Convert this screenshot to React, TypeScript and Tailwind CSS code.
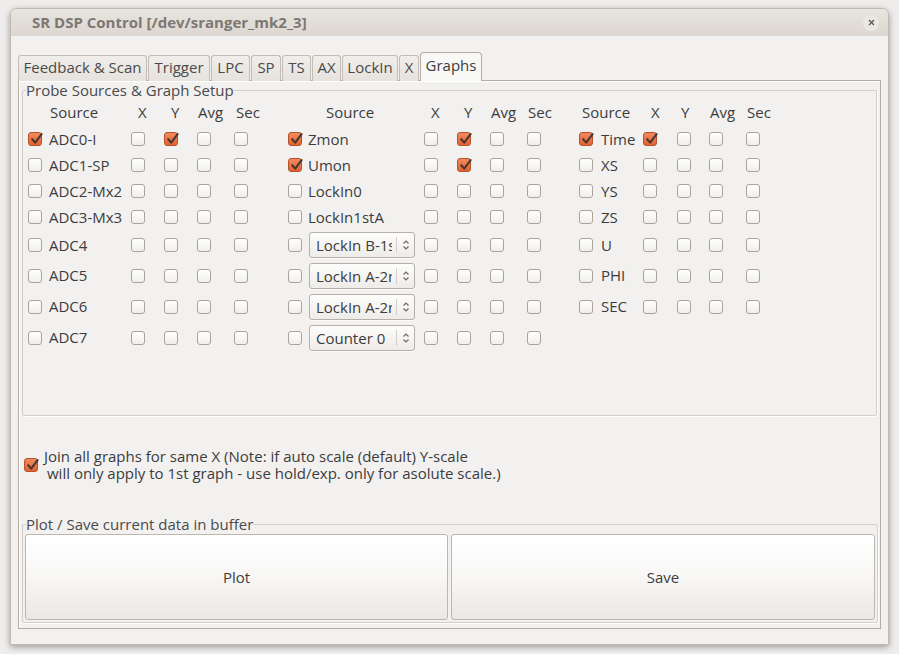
import React from "react";

const FONT = { fontFamily: '"Open Sans", "Noto Sans", sans-serif' };

const colW = [
  "w-[103px]", "w-[33px]", "w-[33px]", "w-[37px]", "w-[54px]",
  "w-[136px]", "w-[33px]", "w-[33px]", "w-[37px]", "w-[52px]",
  "w-[64px]", "w-[34px]", "w-[32px]", "w-[37px]", "w-[30px]",
];
const headPad = [
  "pl-[22px]", "pl-[7px]", "pl-[7px]", "pl-[1px]", "pl-[2px]",
  "pl-[38px]", "pl-[7px]", "pl-[7px]", "pl-[1px]", "pl-[1px]",
  "pl-[3px]", "pl-[8px]", "pl-[4px]", "pl-[1px]", "pl-[1px]",
];
const headers = ["Source", "X", "Y", "Avg", "Sec", "Source", "X", "Y", "Avg", "Sec", "Source", "X", "Y", "Avg", "Sec"];

const rowH = ["h-[26px]", "h-[26px]", "h-[26px]", "h-[26px]", "h-[30px]", "h-[31px]", "h-[31px]", "h-[31px]"];

type Row = { s1: string; s2: string; combo?: boolean; s3?: string; checked: number[] };
const rows: Row[] = [
  { s1: "ADC0-I", s2: "Zmon", s3: "Time", checked: [0, 2, 5, 7, 10, 11] },
  { s1: "ADC1-SP", s2: "Umon", s3: "XS", checked: [5, 7] },
  { s1: "ADC2-Mx2", s2: "LockIn0", s3: "YS", checked: [] },
  { s1: "ADC3-Mx3", s2: "LockIn1stA", s3: "ZS", checked: [] },
  { s1: "ADC4", s2: "LockIn B-1st", combo: true, s3: "U", checked: [] },
  { s1: "ADC5", s2: "LockIn A-2nd", combo: true, s3: "PHI", checked: [] },
  { s1: "ADC6", s2: "LockIn A-2nd", combo: true, s3: "SEC", checked: [] },
  { s1: "ADC7", s2: "Counter 0", combo: true, checked: [] },
];

function Check({ on }: { on?: boolean }) {
  if (on) {
    return (
      <span className="relative block w-[14px] h-[14px] shrink-0 rounded-[3px] border border-[#b4532a] bg-gradient-to-b from-[#f28a5e] to-[#e2622f]">
        <svg className="absolute left-[1px] top-[-1px]" width="14" height="14" viewBox="0 0 14 14">
          <path d="M2.2 7.2 L5.2 10.6 L11.6 2.2" fill="none" stroke="#4a3630" strokeWidth="2.1" strokeLinecap="round" strokeLinejoin="round" />
        </svg>
      </span>
    );
  }
  return (
    <span className="block w-[14px] h-[14px] shrink-0 rounded-[3px] border border-[#a9a39c] bg-gradient-to-b from-[#ffffff] to-[#f1efec]" />
  );
}

function Combo({ text }: { text: string }) {
  return (
    <div className="flex items-center w-[106px] h-[26px] rounded-[3px] border border-[#b7b0a8] bg-gradient-to-b from-[#fdfdfc] to-[#eeece9] shadow-[0_1px_0_rgba(255,255,255,0.8)]">
      <div className="w-[76px] ml-[6px] overflow-hidden whitespace-nowrap text-[15px] leading-[18px] text-[#3c3c3c]">{text}</div>
      <div className="ml-[4px] w-px h-[16px] bg-[#d3cec8]" />
      <div className="flex-1 flex justify-center">
        <svg width="8" height="12" viewBox="0 0 8 12">
          <path d="M1.5 4.5 L4 2 L6.5 4.5" fill="none" stroke="#6f6a65" strokeWidth="1.2" />
          <path d="M1.5 7.5 L4 10 L6.5 7.5" fill="none" stroke="#6f6a65" strokeWidth="1.2" />
        </svg>
      </div>
    </div>
  );
}

function Tab({ label, w, active }: { label: string; w: string; active?: boolean }) {
  if (active) {
    return (
      <div className={`${w} h-[29px] relative z-10 flex items-center justify-center rounded-t-[4px] border border-b-0 border-[#b3aca4] bg-[#f8f8f7] text-[15px] text-[#3c3c3c] pb-[3px]`}>
        {label}
      </div>
    );
  }
  return (
    <div className={`${w} h-[26px] flex items-center justify-center rounded-t-[3px] border border-b-0 border-[#c2bcb5] bg-gradient-to-b from-[#f0eeeb] to-[#e6e2de] text-[15px] text-[#4a4a4a] pb-[2px]`}>
      {label}
    </div>
  );
}

export default function App() {
  return (
    <div className="w-[899px] h-[654px] bg-[#efedeb] pt-[8px] pl-[10px] overflow-hidden" style={FONT}>
      <div className="w-[879px] h-[637px] flex flex-col rounded-t-[7px] border border-[#bfb9b2] bg-[#f2f1f0] shadow-[0_2px_6px_rgba(0,0,0,0.35)]">
        {/* Title bar */}
        <div className="h-[27px] shrink-0 flex items-center justify-between rounded-t-[6px] bg-gradient-to-b from-[#e8e4de] to-[#dcd7d0] pl-[21px] pr-[9px]">
          <span className="text-[15px] font-bold text-[#7c7874]">SR DSP Control [/dev/sranger_mk2_3]</span>
          <span className="w-[16px] h-[16px] rounded-full bg-[#ebe8e4] flex items-center justify-center">
            <svg width="7" height="7" viewBox="0 0 7 7">
              <path d="M1 1 L6 6 M6 1 L1 6" stroke="#5a5754" strokeWidth="1.3" />
            </svg>
          </span>
        </div>

        {/* Body */}
        <div className="flex-1 pl-[7px] pt-[16px]">
          {/* Tabs */}
          <div className="flex items-end gap-[1px] h-[29px] text-[#3c3c3c]">
            <Tab label="Feedback & Scan" w="w-[129px]" />
            <Tab label="Trigger" w="w-[62px]" />
            <Tab label="LPC" w="w-[39px]" />
            <Tab label="SP" w="w-[30px]" />
            <Tab label="TS" w="w-[29px]" />
            <Tab label="AX" w="w-[29px]" />
            <Tab label="LockIn" w="w-[56px]" />
            <Tab label="X" w="w-[20px]" />
            <Tab label="Graphs" w="w-[62px]" active />
          </div>

          {/* Notebook page */}
          <div className="-mt-px w-[863px] h-[549px] border border-[#b3aca4] bg-[#f2f1f0] shadow-[inset_1px_1px_0_#ffffff] pl-[3px]">
            {/* Frame 1 */}
            <fieldset className="w-[855px] border border-[#d3cec8] rounded-[2px] shadow-[1px_1px_0_#ffffff]">
              <legend className="ml-[3px] px-0 text-[15px] leading-[18px] text-[#4a4a4a]">Probe Sources &amp; Graph Setup</legend>
              <div className="h-[316px] pl-[5px] text-[15px] text-[#3c3c3c]">
                <div className="flex h-[27px] items-center">
                  {headers.map((h, i) => (
                    <div key={i} className={`${colW[i]} ${headPad[i]} shrink-0`}>{h}</div>
                  ))}
                </div>
                {rows.map((r, ri) => (
                  <div key={ri} className={`flex items-center ${rowH[ri]}`}>
                    <div className={`${colW[0]} shrink-0 flex items-center gap-[7px]`}>
                      <Check on={r.checked.includes(0)} />
                      <span>{r.s1}</span>
                    </div>
                    {[1, 2, 3, 4].map((c) => (
                      <div key={c} className={`${colW[c]} shrink-0`}>
                        <Check on={r.checked.includes(c)} />
                      </div>
                    ))}
                    <div className={`${colW[5]} shrink-0 flex items-center gap-[7px]`}>
                      <Check on={r.checked.includes(5)} />
                      {r.combo ? <Combo text={r.s2} /> : <span className="-ml-px">{r.s2}</span>}
                    </div>
                    {[6, 7, 8, 9].map((c) => (
                      <div key={c} className={`${colW[c]} shrink-0`}>
                        <Check on={r.checked.includes(c)} />
                      </div>
                    ))}
                    {r.s3 && (
                      <>
                        <div className={`${colW[10]} shrink-0 flex items-center gap-[8px]`}>
                          <Check on={r.checked.includes(10)} />
                          <span>{r.s3}</span>
                        </div>
                        {[11, 12, 13, 14].map((c) => (
                          <div key={c} className={`${colW[c]} shrink-0`}>
                            <Check on={r.checked.includes(c)} />
                          </div>
                        ))}
                      </>
                    )}
                  </div>
                ))}
              </div>
            </fieldset>

            {/* Join option */}
            <div className="mt-[32px] flex items-center gap-[6px] pl-[2px] h-[34px]">
              <Check on />
              <div className="text-[15px] leading-[17px] text-[#3c3c3c]">
                <div>Join all graphs for same X (Note: if auto scale (default) Y-scale</div>
                <div className="pl-[3px]">will only apply to 1st graph - use hold/exp. only for asolute scale.)</div>
              </div>
            </div>

            {/* Frame 2 */}
            <fieldset className="mt-[34px] w-[855px] border border-[#d3cec8] rounded-[2px] shadow-[1px_1px_0_#ffffff] px-[2px] pb-[2px]">
              <legend className="ml-[1px] px-0 text-[15px] leading-[17px] text-[#4a4a4a]">Plot / Save current data in buffer</legend>
              <div className="flex gap-[3px] pt-[1px]">
                <button className="w-[423px] h-[86px] rounded-[3px] border border-[#bdb6ae] bg-gradient-to-b from-[#ffffff] via-[#f8f7f6] to-[#ebe8e4] text-[15px] text-[#3c3c3c]">
                  Plot
                </button>
                <button className="w-[424px] h-[86px] rounded-[3px] border border-[#bdb6ae] bg-gradient-to-b from-[#ffffff] via-[#f8f7f6] to-[#ebe8e4] text-[15px] text-[#3c3c3c]">
                  Save
                </button>
              </div>
            </fieldset>
          </div>
        </div>
      </div>
    </div>
  );
}
